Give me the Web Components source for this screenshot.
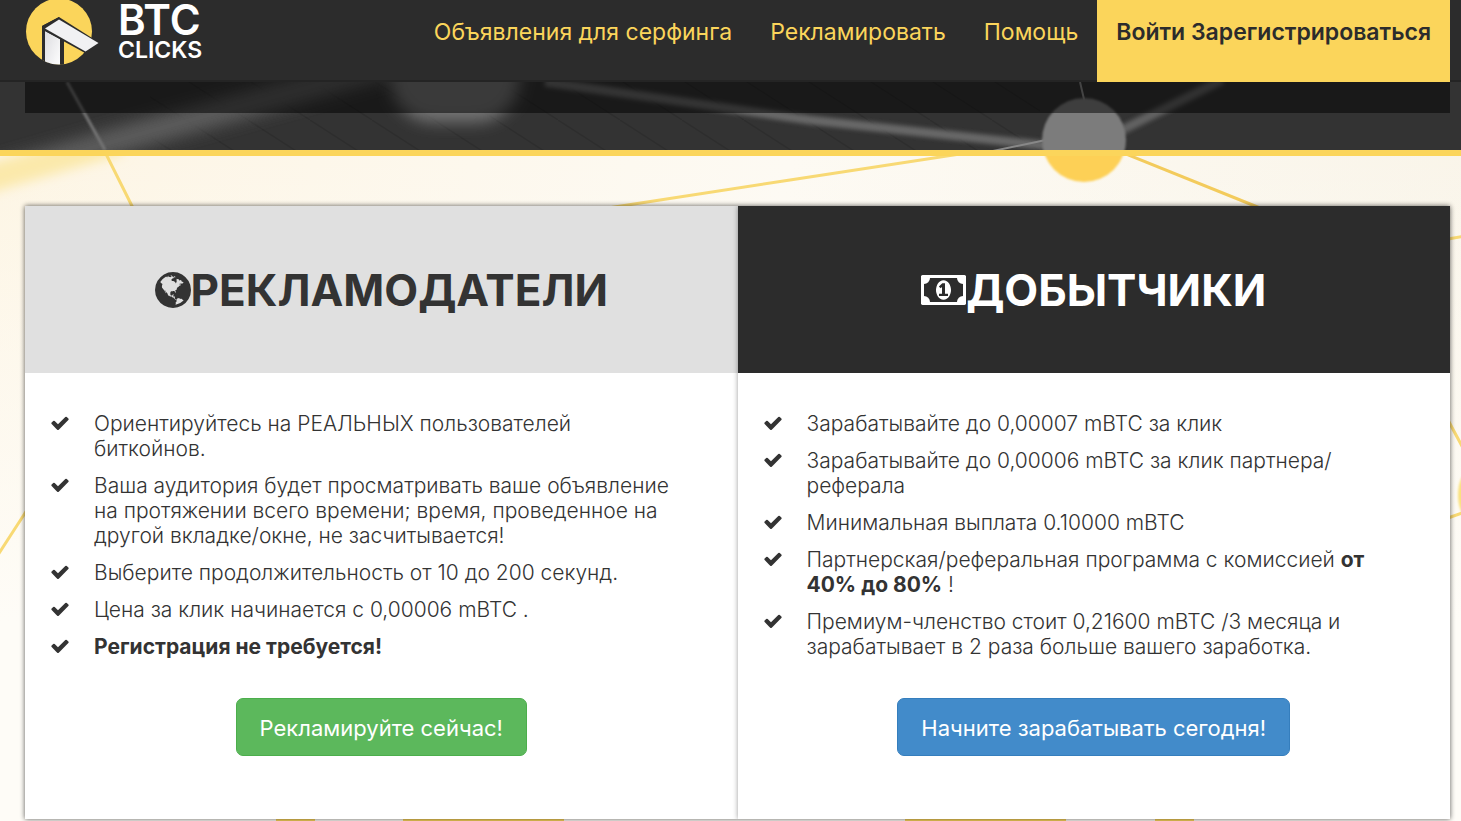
<!DOCTYPE html>
<html lang="ru">
<head>
<meta charset="utf-8">
<meta name="viewport" content="width=device-width, initial-scale=1">
<title>BTC Clicks</title>
<style>
  html, body { margin: 0; padding: 0; }
  body {
    --ink: #333;
    --dark: #2c2c2c;
    --gold: #fbd55b;
    --edge-left: 25px;
    --edge-right: 11px;
    font-family: Inter, "Noto Sans", sans-serif;
    font-size: 21px;
    line-height: 25px;
    color: var(--ink);
    background: #fdfbf5;
  }
</style>
</head>
<body>
<site-header>
  <nav-link href="#surf">Объявления для серфинга</nav-link>
  <nav-link href="#advertise">Рекламировать</nav-link>
  <nav-link href="#help">Помощь</nav-link>
  <nav-link href="#login" highlight>Войти Зарегистрироваться</nav-link>
</site-header>
<hero-strip></hero-strip>
<network-section>
  <offer-card tone="light">
    <fa-icon slot="icon" name="globe"></fa-icon>
    <span slot="title">РЕКЛАМОДАТЕЛИ</span>
    <check-item>Ориентируйтесь на РЕАЛЬНЫХ пользователей биткойнов.</check-item>
    <check-item>Ваша аудитория будет просматривать ваше объявление на протяжении всего времени; время, проведенное на другой вкладке/окне, не засчитывается!</check-item>
    <check-item>Выберите продолжительность от 10 до 200 секунд.</check-item>
    <check-item>Цена за клик начинается с 0,00006 mBTC .</check-item>
    <check-item><b>Регистрация не требуется!</b></check-item>
    <action-button slot="action" tone="green">Рекламируйте сейчас!</action-button>
  </offer-card>
  <offer-card tone="dark">
    <fa-icon slot="icon" name="money"></fa-icon>
    <span slot="title">ДОБЫТЧИКИ</span>
    <check-item>Зарабатывайте до 0,00007 mBTC за клик</check-item>
    <check-item>Зарабатывайте до 0,00006 mBTC за клик партнера/<wbr>реферала</check-item>
    <check-item>Минимальная выплата 0.10000 mBTC</check-item>
    <check-item>Партнерская/реферальная программа с комиссией <b>от 40% до 80%</b> !</check-item>
    <check-item>Премиум-членство стоит 0,21600 mBTC /3 месяца и зарабатывает в 2 раза больше вашего заработка.</check-item>
    <action-button slot="action" tone="blue">Начните зарабатывать сегодня!</action-button>
  </offer-card>
</network-section>

<template id="tpl-header">
  <style>
    :host { display: block; background: var(--dark); border-bottom: 2px solid #242424; height: 80px; }
    header { display: flex; justify-content: space-between; padding: 0 var(--edge-right) 0 var(--edge-left); }
    nav { display: flex; height: 82px; }
  </style>
  <header>
    <brand-logo></brand-logo>
    <nav aria-label="Главное меню"><slot></slot></nav>
  </header>
</template>

<template id="tpl-logo">
  <style>
    :host { display: block; }
    a { display: flex; gap: 18px; color: #fff; text-decoration: none; }
    svg { display: block; width: 75px; height: 68px; }
    .words { display: flex; flex-direction: column; }
    .top { font-size: 42px; line-height: 39px; font-weight: 600; }
    .bottom { font-size: 23px; line-height: 22px; font-weight: 600; }
  </style>
  <a href="#home">
    <svg viewBox="25 0 75 68" aria-hidden="true">
      <defs>
        <linearGradient id="post" x1="0" y1="0" x2="1" y2="1"><stop offset="0" stop-color="#dcdce0"/><stop offset="1" stop-color="#fff"/></linearGradient>
        <clipPath id="disc"><circle cx="59" cy="31" r="33.500"/></clipPath>
      </defs>
      <circle cx="59" cy="31.500" r="33" fill="#fbd55b"/>
      <g clip-path="url(#disc)">
        <path d="M42 26 59 17 64 36 62.500 68H42z" fill="#2c2c2c"/>
        <path d="M45 31 60 39V68H45z" fill="url(#post)"/>
        <path d="M61 39 64 41V68H61z" fill="#2c2c2c"/>
      </g>
      <path d="M42 26 59 17 100 43 85 53 45 31z" fill="#2c2c2c"/>
      <path d="M45 28.500 59 19.500 98.500 43 85.500 51.500z" fill="#f1f1f3"/>
    </svg>
    <span class="words"><span class="top">BTC</span><span class="bottom">CLICKS</span></span>
  </a>
</template>

<template id="tpl-nav">
  <style>
    :host { display: block; }
    a { display: block; box-sizing: border-box; height: 100%; padding: 20px 19px; font-size: 23px; line-height: 25px; color: var(--gold); text-decoration: none; white-space: nowrap; }
    :host([highlight]) a { background: var(--gold); color: var(--dark); font-weight: 600; }
  </style>
  <a><slot></slot></a>
</template>

<template id="tpl-hero">
  <style>
    :host { display: block; position: relative; overflow: hidden; background: #333; border-bottom: 6px solid var(--gold); }
    svg { position: absolute; inset: 0; width: 100%; height: 100%; }
    .stage { position: relative; padding: 0 var(--edge-right) 37px var(--edge-left); }
    .shade { height: 31px; background: rgba(0, 0, 0, .5); }
  </style>
  <svg viewBox="0 82 1461 68" preserveAspectRatio="xMidYMin slice" aria-hidden="true">
    <defs>
      <filter id="b8" x="-30%" y="-60%" width="160%" height="220%"><feGaussianBlur stdDeviation="8"/></filter>
      <filter id="b2" x="-10%" y="-30%" width="120%" height="160%"><feGaussianBlur stdDeviation="2"/></filter>
      <filter id="b1"><feGaussianBlur stdDeviation="1"/></filter>
      <pattern id="grain" width="62" height="40" patternUnits="userSpaceOnUse"><path d="M0 0 62 40" stroke="#292929" stroke-width="1.500"/></pattern>
    </defs>
    <rect x="150" y="82" width="890" height="68" fill="url(#grain)" opacity=".6"/>
    <path d="M-20 180 140 134 400 62" stroke="#5c5c5c" stroke-width="26" fill="none" filter="url(#b8)"/>
    <rect x="390" y="20" width="130" height="102" rx="44" fill="#757575" filter="url(#b8)"/>
    <path d="M67 82 105 150" stroke="#737373" stroke-width="3" filter="url(#b1)"/>
    <path d="M545 82 810 120 1050 146" stroke="#686868" stroke-width="9" fill="none" filter="url(#b2)"/>
    <path d="M1120 131 1222 80" stroke="#626262" stroke-width="9" filter="url(#b2)"/>
    <path d="M988 152 1046 140M1080 82 1087 112" stroke="#888" stroke-width="2"/>
    <circle cx="1084" cy="140" r="42" fill="#7b7b7b" filter="url(#b1)"/>
  </svg>
  <div class="stage"><div class="shade"></div></div>
</template>

<template id="tpl-network">
  <style>
    :host { display: block; position: relative; overflow: hidden; background: linear-gradient(rgba(254, 252, 247, 0), #fefcf7 70%), linear-gradient(100deg, #fdf5e4, #fdfaf3 50%, #f9f4e8); }
    svg { position: absolute; inset: 0; width: 100%; height: 100%; }
    .cards { position: relative; display: grid; grid-template-columns: 1fr 1fr; margin: 50px var(--edge-right) 2px var(--edge-left); background: #fff; box-shadow: 0 0 5px rgba(0, 0, 0, .3); }
  </style>
  <svg viewBox="0 156 1461 665" preserveAspectRatio="xMidYMin slice" aria-hidden="true">
    <defs>
      <filter id="soft" x="-20%" y="-60%" width="140%" height="220%"><feGaussianBlur stdDeviation="6"/></filter>
      <filter id="slight"><feGaussianBlur stdDeviation="1"/></filter>
    </defs>
    <path d="M-30 184 120 140" stroke="#fbe9ab" stroke-width="28" filter="url(#soft)"/>
    <g fill="none" stroke="#f8d974" stroke-width="3">
      <path d="M106 154 133 208M608 208 790 180 960 154M-4 558 27 510M1448 239 1465 236M1448 420 1463 448M1448 518 1465 512"/>
      <path d="M1126 154 1260 208" stroke="#f3cb5c"/>
    </g>
    <circle cx="1084" cy="140" r="42" fill="#fdd056" filter="url(#slight)"/>
    <ellipse cx="1470" cy="495" rx="12" ry="24" fill="#fae17d" filter="url(#slight)"/>
    <path d="M276 820H315M403 820H564M905 820H1066M1155 820H1194" stroke="#fbd55b" stroke-width="4"/>
  </svg>
  <div class="cards"><slot></slot></div>
</template>

<template id="tpl-card">
  <style>
    :host { display: flex; flex-direction: column; min-width: 0; box-shadow: 0 0 5px rgba(0, 0, 0, .4); background: #fff; }
    h2 { display: flex; align-items: center; justify-content: center; height: 167px; margin: 0; font-size: 44px; line-height: 50px; font-weight: 700; background: #e0e0e0; }
    :host([tone="dark"]) h2 { background: var(--dark); color: #fff; }
    .list { display: flex; flex-direction: column; gap: 12px; padding: 38px 56px 39px 25px; }
    .action { display: flex; justify-content: center; margin-top: auto; padding-bottom: 63px; }
  </style>
  <h2><slot name="icon"></slot><slot name="title"></slot></h2>
  <div class="list" role="list"><slot></slot></div>
  <div class="action"><slot name="action"></slot></div>
</template>

<template id="tpl-item">
  <style>
    :host { display: grid; grid-template-columns: 20px 1fr; column-gap: 24px; font-weight: 300; }
    fa-icon { padding-top: 2px; }
    ::slotted(b) { font-weight: 700; }
  </style>
  <fa-icon name="check"></fa-icon>
  <div><slot></slot></div>
</template>

<template id="tpl-button">
  <style>
    :host { display: block; }
    button { display: block; box-sizing: border-box; height: 58px; padding: 2px 23px 0; border: 1px solid #4cae4c; border-radius: 7px; background: #5cb85c; color: #fff; font: inherit; font-size: 22px; line-height: 30px; cursor: pointer; }
    :host([tone="blue"]) button { background: #428bca; border-color: #357ebd; }
  </style>
  <button type="button"><slot></slot></button>
</template>

<script>
  const attach = (el, id) => {
    const root = el.attachShadow({ mode: "open" });
    root.append(document.getElementById(id).content.cloneNode(true));
    return root;
  };

  const ICONS = {
    check: { box: "0 0 1792 1792", w: 20, h: 20, d: "M1671 566q0 40-28 68l-724 724-136 136q-28 28-68 28t-68-28l-136-136-362-362q-28-28-28-68t28-68l136-136q28-28 68-28t68 28l294 295 656-657q28-28 68-28t68 28l136 136q28 28 28 68z" },
    money: { box: "0 256 1920 1280", w: 45, h: 30, rule: "evenodd", d: "M768 1152h384v-96h-128v-448h-114l-148 137 77 80q42-37 55-57h2v288h-128v96zm512-256q0 70-21 142t-59.5 134-101.500 101-138 39-138-39-101.500-101-59.500-134-21-142 21-142 59.500-134 101.500-101 138-39 138 39 101.500 101 59.500 134 21 142zm512 256v-512q-106 0-181-75t-75-181h-1152q0 106-75 181t-181 75v512q106 0 181 75t75 181h1152q0-106 75-181t181-75zm128-832v1152q0 26-19 45t-45 19h-1792q-26 0-45-19t-19-45v-1152q0-26 19-45t45-19h1792q26 0 45 19t19 45z" },
    globe: { box: "128 128 1536 1536", w: 36, h: 36, d: "M896 128q209 0 385.5 103t279.5 279.5 103 385.5-103 385.5-279.5 279.5-385.5 103-385.5-103-279.5-279.5-103-385.5 103-385.5 279.5-279.5 385.5-103zm274 521q-2 1-9.5 9.5t-13.5 9.5q2 0 4.5-5t5-11 3.5-7q6-7 22-15 14-6 52-12 34-8 51 11-2-2 9.5-13t14.5-12q3-2 15-4.5t15-7.5l2-22q-12 1-17.5-7t-6.5-21q0 2-6 8 0-7-4.5-8t-11.5 1-9 1q-10-3-15-7.5t-8-16.5-4-15q-2-5-9.5-11t-9.5-10q-1-2-2.5-5.5t-3-6.5-4-5.5-5.5-2.5-7 5-7.5 10-4.5 5q-3-2-6-1.5t-4.5 1-4.5 3-5 3.5q-3 2-8.5 3t-8.5 2q15-5-1-11-10-4-16-3 9-4 7.5-12t-8.5-14h5q-1-4-8.5-8.5t-17.5-8.5-13-6q-8-5-34-9.5t-33-.5q-5 6-4.5 10.5t4 14 3.5 12.5q1 6-5.5 13t-6.5 12q0 7 14 15.5t10 21.5q-3 8-16 16t-16 12q-5 8-1.5 18.5t10.5 16.5q2 2 1.5 4t-3.5 4.5-5.5 4-6.5 3.5l-3 2q-11 5-20.5-6t-13.5-26q-7-25-16-30-23-8-29 1-5-13-41-26-25-9-58-4 6-1 0-15-7-15-19-12 3-6 4-17.5t1-13.5q3-13 12-23 1-1 7-8.5t9.5-13.5.5-6q35 4 50-11 5-5 11.5-17t10.5-17q9-6 14-5.5t14.5 5.5 14.5 5q14 1 15.5-11t-7.5-20q12 1 3-17-4-7-8-9-12-4-27 5-8 4 2 8-1-1-9.5 10.5t-16.5 17.5-16-5q-1-1-5.5-13.5t-9.5-13.5q-8 0-16 15 3-8-11-15t-24-8q19-12-8-27-7-4-20.5-5t-19.5 4q-5 7-5.5 11.5t5 8 10.5 5.5 11.5 4 8.5 3q14 10 8 14-2 1-8.5 3.5t-11.5 4.5-6 4q-3 4 0 14t-2 14q-5-5-9-17.5t-7-16.5q7 9-25 6l-10-1q-4 0-16 2t-20.5 1-13.5-8q-4-8 0-20 1-4 4-2-4-3-11-9.5t-10-8.5q-46 15-94 41 6 1 12-1 5-2 13-6.5t10-5.5q34-14 42-7l5-5q14 16 20 25-7-4-30-1-20 6-22 12 7 12 5 18-4-3-11.5-10t-14.5-11-15-5q-16 0-22 1-146 80-235 222 7 7 12 8 4 1 5 9t2.5 11 11.5-3q9 8 3 19 1-1 44 27 19 17 21 21 3 11-10 18-1-2-9-9t-9-4q-3 5 .5 18.5t10.5 12.5q-7 0-9.5 16t-2.5 35.5-1 23.5l2 1q-3 12 5.5 34.5t21.5 19.5q-13 3 20 43 6 8 8 9 3 2 12 7.5t15 10 10 10.5q4 5 10 22.5t14 23.5q-2 6 9.5 20t10.5 23q-1 0-2.5 1t-2.5 1q3 7 15.5 14t15.5 13q1 3 2 10t3 11 8 2q2-20-24-62-15-25-17-29-3-5-5.5-15.5t-4.5-14.5q2 0 6 1.5t8.5 3.5 7.5 4 2 3q-3 7 2 17.5t12 18.5 17 19 12 13q6 6 14 19.5t0 13.5q9 0 20 10.5t17 19.5q5 8 8 26t5 24q2 7 8.5 13.5t12.5 9.5l16 8 13 7q5 2 18.5 10.5t21.5 11.5q10 4 16 4t14.5-2.5 13.5-3.5q15-2 29 15t21 21q36 19 55 11-2 1 .5 7.5t8 15.5 9 14.5 5.5 8.5q5 6 18 15t18 15q6-4 7-9-3 8 7 20t18 10q14-3 14-32-31 15-49-18 0-1-2.5-5.5t-4-8.5-2.5-8.5 0-7.5 5-3q9 0 10-3.5t-2-12.5-4-13q-1-8-11-20t-12-15q-5 9-16 8t-16-9q0 1-1.5 5.5t-1.5 6.5q-13 0-15-1 1-3 2.5-17.5t3.5-22.5q1-4 5.5-12t7.5-14.5 4-12.5-4.5-9.5-17.5-2.5q-19 1-26 20-1 3-3 10.5t-5 11.5-9 7q-7 3-24 2t-24-5q-13-8-22.5-29t-9.5-37q0-10 2.5-26.5t3-25-5.5-24.5q3-2 9-9.5t10-10.5q2-1 4.5-1.5t4.5 0 4-1.5 3-6q-1-1-4-3-3-3-4-3 7 3 28.5-1.5t27.5 1.5q15 11 22-2 0-1-2.5-9.5t-.5-13.5q5 27 29 9 3 3 15.5 5t17.5 5q3 2 7 5.5t5.5 4.5 5-.5 8.5-6.5q10 14 12 24 11 40 19 44 7 3 11 2t4.5-9.5 0-14-1.5-12.5l-1-8v-18l-1-8q-15-3-18.5-12t1.5-18.5 15-18.5q1-1 8-3.5t15.5-6.5 12.5-8q21-19 15-35 7 0 11-9-1 0-5-3t-7.5-5-4.5-2q9-5 2-16 5-3 7.5-11t7.5-10q9 12 21 2 7-8 1-16 5-7 20.5-10.5t18.5-9.5q7 2 8-2t1-12 3-12q4-5 15-9t13-5l17-11q3-4 0-4 18 2 31-11 10-11-6-20 3-6-3-9.5t-15-5.5q3-1 11.5-.5t10.5-1.5q15-10-7-16-17-5-43 12zm-163 877q206-36 351-189-3-3-12.5-4.5t-12.5-3.5q-18-7-24-8 1-7-2.5-13t-8-9-12.5-8-11-7q-2-2-7-6t-7-5.5-7.5-4.5-8.5-2-10 1l-3 1q-3 1-5.5 2.5t-5.5 3-4 3 0 2.5q-21-17-36-22-5-1-11-5.5t-10.5-7-10-1.500-11.500 7q-5 5-6 15t-2 13q-7-5 0-17.500t2-18.500q-3-6-10.500-4.500t-12 4.500-11.500 8.500-9 6.500-8.500 5.500-8.500 7.500q-3 4-6 12t-5 11q-2-4-11.500-6.500t-9.500-5.500q2 10 4 35t5 38q7 31-12 48-27 25-29 40-4 22 12 26 0 7-8 20.500t-7 21.500q0 6 2 16z" }
  };

  class FaIcon extends HTMLElement {
    constructor() { super(); this.attachShadow({ mode: "open" }); }
    connectedCallback() {
      const i = ICONS[this.getAttribute("name")];
      this.shadowRoot.innerHTML =
        `<style>:host{display:block;flex:none}svg{display:block;fill:currentColor}</style>
         <svg width="${i.w}" height="${i.h}" viewBox="${i.box}" fill-rule="${i.rule || "nonzero"}" aria-hidden="true"><path d="${i.d}"/></svg>`;
    }
  }
  class NavLink extends HTMLElement {
    constructor() { super(); this.link = attach(this, "tpl-nav").querySelector("a"); }
    connectedCallback() { this.link.href = this.getAttribute("href"); }
  }
  class CheckItem extends HTMLElement {
    constructor() { super(); attach(this, "tpl-item"); }
    connectedCallback() { this.setAttribute("role", "listitem"); }
  }
  const simple = (name, id) => customElements.define(name, class extends HTMLElement {
    constructor() { super(); attach(this, id); }
  });

  customElements.define("fa-icon", FaIcon);
  customElements.define("nav-link", NavLink);
  customElements.define("check-item", CheckItem);
  simple("brand-logo", "tpl-logo");
  simple("site-header", "tpl-header");
  simple("hero-strip", "tpl-hero");
  simple("action-button", "tpl-button");
  simple("offer-card", "tpl-card");
  simple("network-section", "tpl-network");
</script>
</body>
</html>
